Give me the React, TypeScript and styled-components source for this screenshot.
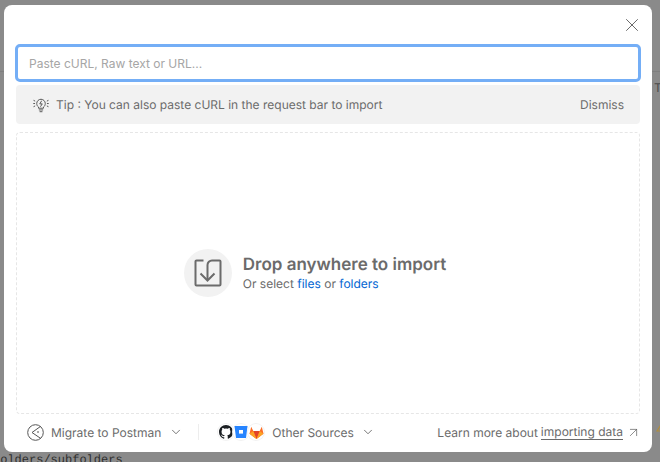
import styled, { createGlobalStyle } from "styled-components";
import { ChevronDown, X, ArrowUpRight } from "lucide-react";

const GlobalStyle = createGlobalStyle`
  html, body {
    margin: 0;
    padding: 0;
    height: 100%;
    overflow: hidden;
  }
  body {
    font-family: Inter, "Noto Sans", sans-serif;
    text-rendering: geometricPrecision;
    -webkit-font-smoothing: antialiased;
  }
`;

const Page = styled.div`
  position: relative;
  display: flex;
  flex-direction: column;
  width: 660px;
  height: 462px;
  overflow: hidden;
  background-color: #8a8a8a;
`;

const BackdropLine = styled.div`
  margin-top: 71px;
  height: 1px;
  background-color: #7f7f7f;
`;

const BackdropLetter = styled.div`
  align-self: flex-end;
  width: 6px;
  margin-top: 9px;
  font-size: 12px;
  line-height: 14px;
  overflow: hidden;
  color: #4a4a4a;
`;

const BackdropWarning = styled.svg`
  align-self: flex-end;
  margin-top: auto;
  margin-right: -8px;
`;

const BackdropCode = styled.div`
  margin-top: 21px;
  margin-bottom: -5px;
  margin-left: -7px;
  font-family: "Liberation Mono", monospace;
  font-size: 12px;
  line-height: 14px;
  color: #2e2e2e;
`;

const Modal = styled.div`
  position: absolute;
  top: 5px;
  left: 4px;
  width: 648px;
  height: 447px;
  box-sizing: border-box;
  display: flex;
  flex-direction: column;
  padding: 0 12px;
  background-color: #fff;
  border-radius: 8px;
`;

const CloseRow = styled.div`
  display: flex;
  justify-content: flex-end;
  height: 39px;
  margin-right: -3px;
  padding-top: 9px;
  box-sizing: border-box;
  color: #4a4a4a;
`;

const UrlInput = styled.input`
  display: block;
  box-sizing: border-box;
  height: 38px;
  margin: 0 -1px;
  width: calc(100% + 2px);
  padding: 0 11px;
  border: 3px solid #74aef6;
  border-radius: 5px;
  outline: none;
  font-family: inherit;
  font-size: 12px;
  color: #212121;
  &::placeholder {
    color: #a6a6a6;
    opacity: 1;
  }
`;

const TipBar = styled.div`
  display: flex;
  align-items: center;
  height: 39px;
  margin-top: 3px;
  padding: 0 16px 0 17px;
  border-radius: 4px;
  background-color: #f2f2f2;
  font-size: 12px;
  color: #6b6b6b;
`;

const TipText = styled.span`
  flex: 1;
  margin-left: 7px;
`;

const DropZone = styled.div`
  flex: 1;
  display: flex;
  align-items: center;
  justify-content: center;
  gap: 11px;
  margin-top: 8px;
  padding-right: 26px;
  border: 1px dashed #e6e6e6;
  border-radius: 4px;
`;

const DropCircle = styled.div`
  display: flex;
  align-items: center;
  justify-content: center;
  width: 48px;
  height: 48px;
  border-radius: 50%;
  background-color: #f2f2f2;
  color: #6b6b6b;
`;

const DropText = styled.div`
  padding-top: 2px;
`;

const DropTitle = styled.div`
  font-size: 17px;
  line-height: 20px;
  font-weight: 600;
  color: #6b6b6b;
`;

const DropSub = styled.div`
  font-size: 12px;
  line-height: 18px;
  color: #6b6b6b;
  a {
    color: #0265d2;
    text-decoration: none;
  }
`;

const Footer = styled.div`
  display: flex;
  align-items: center;
  height: 38px;
  box-sizing: border-box;
  padding: 0 0 2px 11px;
  font-size: 12px;
  color: #6b6b6b;
`;

const FooterButton = styled.div`
  display: flex;
  align-items: center;
  gap: 7px;
  > svg:last-child {
    color: #3d3d3d;
  }
`;

const MigrateLabel = styled.span`
  margin-right: 1px;
`;

const FooterDivider = styled.div`
  width: 1px;
  height: 16px;
  margin: 0 19px 0 15px;
  background-color: #ededed;
`;

const SourceIcons = styled.div`
  display: flex;
  margin-right: 2px;
`;

const SourceIcon = styled.div`
  display: flex;
  align-items: center;
  justify-content: center;
  width: 16px;
  height: 16px;
  margin-right: -1px;
  border-radius: 50%;
  background-color: #fff;
  box-shadow: 0 0 0 1px #f2f2f2;
`;

const LearnMore = styled.div`
  display: flex;
  align-items: center;
  margin-left: auto;
  margin-right: -1px;
  a {
    margin-left: 3px;
    color: inherit;
    text-decoration: none;
    border-bottom: 1px solid #6b6b6b;
    line-height: 15px;
  }
  svg {
    margin-left: 3px;
    color: #4a4a4a;
  }
`;

const App = () => (
  <Page>
    <GlobalStyle />
    <BackdropLine />
    <BackdropLetter>T</BackdropLetter>
    <BackdropWarning width="12" height="10" viewBox="0 0 12 10" fill="none" stroke="#b08d3c" strokeWidth="1.2">
      <path d="M6 1 1 9h10z" />
    </BackdropWarning>
    <BackdropCode>folders/subfolders</BackdropCode>
    <Modal>
      <CloseRow>
        <X size={22} strokeWidth={0.9} />
      </CloseRow>
      <UrlInput placeholder="Paste cURL, Raw text or URL..." />
      <TipBar>
        <svg width="16" height="17" viewBox="0 0 18 19" fill="none" stroke="#555" strokeWidth="1.1">
          <path d="M6.200 12.400C4.900 11.400 4.200 10 4.200 8.400a4.800 4.800 0 0 1 9.600 0c0 1.600-.7 3-2 4v1.300H6.200z" />
          <path d="M9.800 5.200 7.600 8.800h2.800l-2 3.200" />
          <path d="M6.600 15.600h4.800M7.400 17.600h3.200" />
          <path d="M0.600 4.800l1.800.9M0.300 8.400h2M0.600 12l1.800-.9M17.400 4.800l-1.800.9M17.700 8.400h-2M17.400 12l-1.800-.9" />
        </svg>
        <TipText>Tip : You can also paste cURL in the request bar to import</TipText>
        <span>Dismiss</span>
      </TipBar>
      <DropZone>
        <DropCircle>
          <svg width="28" height="28" viewBox="0 0 28 28" fill="none" stroke="currentColor" strokeWidth="2">
            <path d="M9.500 1.500H2.500a1 1 0 0 0-1 1v23a1 1 0 0 0 1 1h23a1 1 0 0 0 1-1v-23a1 1 0 0 0-1-1H18a4.500 4.500 0 0 0-4.500 4.500V21" />
            <path d="M6.500 14.500l7 7 7-7" />
          </svg>
        </DropCircle>
        <DropText>
          <DropTitle>Drop anywhere to import</DropTitle>
          <DropSub>
            Or select <a href="#files">files</a> or <a href="#folders">folders</a>
          </DropSub>
        </DropText>
      </DropZone>
      <Footer>
        <FooterButton>
          <svg width="17" height="17" viewBox="0 0 17 17" fill="none" stroke="#555" strokeWidth="1">
            <circle cx="8.500" cy="8.500" r="7.800" />
            <path d="M13.400 2.500 5 8.500l8.500 5.800" />
            <path d="M11 7v2" />
          </svg>
          <MigrateLabel>Migrate to Postman</MigrateLabel>
          <ChevronDown size={14} strokeWidth={1.2} />
        </FooterButton>
        <FooterDivider />
        <FooterButton>
          <SourceIcons>
            <SourceIcon>
              <svg width="14" height="14" viewBox="0 0 16 16" fill="#1b1f23">
                <path d="M8 0C3.580 0 0 3.580 0 8c0 3.540 2.290 6.530 5.470 7.590.4.070.55-.17.55-.38v-1.340c-2.230.48-2.700-1.070-2.700-1.070-.36-.93-.89-1.170-.89-1.170-.73-.5.050-.49.050-.49.8.060 1.230.83 1.230.83.71 1.220 1.870.87 2.330.66.070-.52.280-.87.510-1.070-1.780-.2-3.640-.89-3.640-3.950 0-.87.310-1.590.82-2.150-.08-.2-.36-1.020.08-2.120 0 0 .67-.21 2.200.82a7.600 7.600 0 0 1 4 0c1.530-1.040 2.200-.82 2.200-.82.44 1.100.16 1.920.08 2.120.51.560.82 1.270.82 2.150 0 3.070-1.870 3.750-3.650 3.950.29.250.54.730.54 1.480v2.200c0 .21.150.46.550.38A8 8 0 0 0 16 8c0-4.420-3.580-8-8-8z" />
              </svg>
            </SourceIcon>
            <SourceIcon>
              <svg width="14" height="14" viewBox="0 0 14 14">
                <path d="M.5 1h13L12 13H2z" fill="#2684ff" />
                <rect x="5" y="5" width="4" height="3.600" fill="#fff" />
              </svg>
            </SourceIcon>
            <SourceIcon>
              <svg width="15" height="15" viewBox="0 0 15 15">
                <path d="M7.500 14 .5 8.800l1.700-7L4.300 6h6.400l2.100-4.200 1.700 7z" fill="#fc6d26" />
                <path d="M7.500 14 4.300 6h6.400z" fill="#e24329" />
                <path d="M7.500 14 .5 8.800 4.300 6zM7.500 14l7-5.200L10.700 6z" fill="#fca326" />
              </svg>
            </SourceIcon>
          </SourceIcons>
          <span>Other Sources</span>
          <ChevronDown size={14} strokeWidth={1.2} />
        </FooterButton>
        <LearnMore>
          Learn more about <a href="#import">importing data</a>
          <ArrowUpRight size={15} strokeWidth={1} />
        </LearnMore>
      </Footer>
    </Modal>
  </Page>
);

export default App;
